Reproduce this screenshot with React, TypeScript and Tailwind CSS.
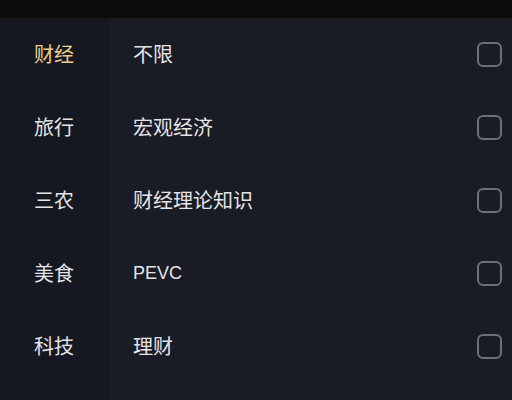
import React from "react";

const rows = [
  { cat: "财经", item: "不限", active: true },
  { cat: "旅行", item: "宏观经济" },
  { cat: "三农", item: "财经理论知识" },
  { cat: "美食", item: "PEVC", latin: true },
  { cat: "科技", item: "理财" },
];

export default function App() {
  return (
    <div
      className="w-[512px] h-[400px] overflow-hidden flex flex-col bg-[#191b25]"
      style={{ fontFamily: '"Liberation Sans", "Noto Sans CJK SC", sans-serif' }}
    >
      <div className="h-[18px] shrink-0 bg-[#0c0c0e]" />
      <div className="flex flex-1">
        <div className="w-[109px] shrink-0 bg-[#161821] flex flex-col">
          {rows.map((r) => (
            <div
              key={r.cat}
              className={`h-[73px] shrink-0 flex items-center pl-[34px] text-[20px] ${
                r.active ? "text-[#e9cd8c]" : "text-[#e4e4e6]"
              }`}
            >
              {r.cat}
            </div>
          ))}
        </div>
        <div className="flex-1 flex flex-col">
          {rows.map((r) => (
            <div
              key={r.item}
              className="h-[73px] shrink-0 flex items-center justify-between pl-[24px] pr-[10px]"
            >
              <span className={`${r.latin ? "text-[18px]" : "text-[20px]"} text-[#e4e4e6]`}>
                {r.item}
              </span>
              <span className="w-[25px] h-[25px] rounded-[6px] border-2 border-[#6c6f79]" />
            </div>
          ))}
        </div>
      </div>
    </div>
  );
}
